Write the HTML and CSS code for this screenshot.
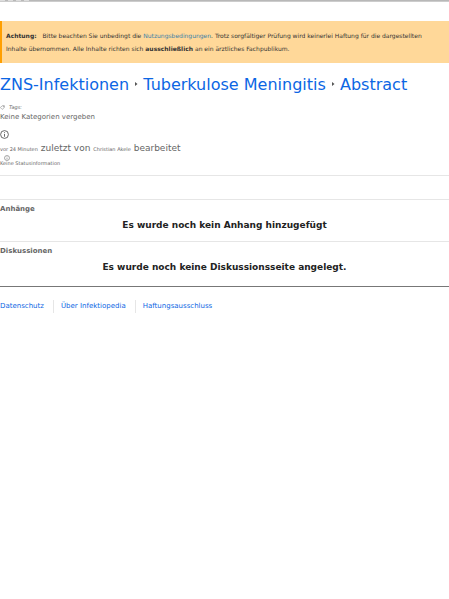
FILE: index.html
```html
<!DOCTYPE html>
<html lang="de">
<head>
  <meta charset="UTF-8">
  <meta name="viewport" content="width=device-width, initial-scale=1.0">
  <title>Tuberkulose Meningitis - Abstract</title>
  <link rel="stylesheet" href="styles.css">
</head>
<body>

  <div class="topbar"><span></span><span></span><span></span><span></span></div>

  <!-- Notice -->
  <div class="notice">
    <strong class="notice-label">Achtung:</strong>
    <p>Bitte beachten Sie unbedingt die <a href="#">Nutzungsbedingungen</a>. Trotz sorgfältiger Prüfung wird keinerlei Haftung für die dargestellten Inhalte übernommen. Alle Inhalte richten sich <strong>ausschließlich</strong> an ein ärztliches Fachpublikum.</p>
  </div>

  <!-- Title -->
  <h1 class="title">
    <a href="#">ZNS-Infektionen</a>
    <svg class="arrow" viewBox="0 0 4 6"><path d="M1 1L3.5 3L1 5Z"/></svg>
    <a href="#">Tuberkulose Meningitis</a>
    <svg class="arrow" viewBox="0 0 4 6"><path d="M1 1L3.5 3L1 5Z"/></svg>
    <a href="#">Abstract</a>
  </h1>

  <!-- Page info -->
  <div class="info">
    <div class="tags">
      <svg class="tag-icon" viewBox="0 0 16 16"><path d="M8 2h6v6l-7 6-6-6z"/><circle cx="11" cy="5" r="1"/></svg>
      <em>Tags:</em>
    </div>
    <div class="categories">Keine Kategorien vergeben</div>
    <svg class="info-icon" viewBox="0 0 18 18"><circle cx="9" cy="9" r="7.8"/><path d="M9 8v5.5M9 4.5v1.8"/></svg>
    <div class="edited"><small>vor 24 Minuten</small> zuletzt von <small>Christian Akele</small> bearbeitet</div>
    <div class="status">
      <svg class="status-icon" viewBox="0 0 18 18"><circle cx="9" cy="9" r="7.5"/><path d="M9 8v5.5M9 4.5v1.8"/></svg>
      <div>Keine Statusinformation</div>
    </div>
  </div>

  <div class="content"></div>

  <!-- Attachments and discussions -->
  <section class="section">
    <h2>Anhänge</h2>
    <p>Es wurde noch kein Anhang hinzugefügt</p>
  </section>
  <section class="section">
    <h2>Diskussionen</h2>
    <p>Es wurde noch keine Diskussionsseite angelegt.</p>
  </section>

  <footer class="footer">
    <a href="#">Datenschutz</a>
    <a href="#">Über Infektiopedia</a>
    <a href="#">Haftungsausschluss</a>
  </footer>

</body>
</html>
```
FILE: styles.css
```css
* {
  box-sizing: border-box;
  margin: 0;
  padding: 0;
}
body {
  font-family: "DejaVu Sans", sans-serif;
  font-size: 7px;
  background: #fff;
  color: #666;
}
a {
  color: #0c66e4;
  text-decoration: none;
}
.topbar {
  display: flex;
  gap: 3px;
  height: 2px;
  background: #b8b8b8;
  border-bottom: 1px solid #ccc;
}
.topbar span {
  width: 5px;
  background: #ddd;
}
.notice {
  margin-top: 19px;
  padding: 8px 6px 8px 4px;
  border-left: 2px solid #ff9f00;
  background: #ffd899;
  font-size: 6px;
  line-height: 13px;
  color: #333;
}
.notice p {
  display: inline;
}
.notice-label {
  margin-right: 4px;
}
.notice a {
  color: #3b7fa8;
}
.title {
  margin-top: 11px;
  font-size: 16px;
  line-height: 22px;
  font-weight: normal;
}
.arrow {
  width: 4px;
  height: 6px;
  vertical-align: 3px;
  fill: #555;
}
.info {
  margin-top: 8px;
  padding-bottom: 9px;
  border-bottom: 1px solid #e6e6e6;
}
.tags {
  display: flex;
  align-items: center;
  gap: 4px;
  font-size: 5px;
  line-height: 7px;
}
.tag-icon {
  width: 5px;
  height: 5px;
  fill: none;
  stroke: #707070;
  stroke-width: 1.5;
}
.categories {
  line-height: 12px;
}
.info-icon {
  display: block;
  width: 9px;
  height: 9px;
  margin-top: 7px;
  fill: none;
  stroke: #444;
  stroke-width: 1.6;
}
.edited {
  margin-top: 3px;
  font-size: 9px;
  line-height: 12px;
}
.edited small {
  font-size: 5px;
}
.status {
  font-size: 5px;
  line-height: 5px;
}
.status-icon {
  display: block;
  width: 6px;
  height: 6px;
  margin-left: 4px;
  fill: none;
  stroke: #555;
  stroke-width: 1.5;
}
.content {
  height: 23px;
}
.section {
  padding-bottom: 9px;
  border-top: 1px solid #e6e6e6;
}
.section h2 {
  padding-top: 4px;
  font-size: 7px;
  line-height: 10px;
}
.section p {
  margin-top: 4px;
  font-size: 9px;
  line-height: 14px;
  font-weight: bold;
  text-align: center;
  color: #222;
}
.footer {
  display: flex;
  margin-top: 3px;
  padding-top: 13px;
  border-top: 1px solid #777;
}
.footer a {
  padding-right: 9px;
  line-height: 13px;
}
.footer a + a {
  padding-left: 7px;
  border-left: 1px solid #e6e6e6;
}
```
